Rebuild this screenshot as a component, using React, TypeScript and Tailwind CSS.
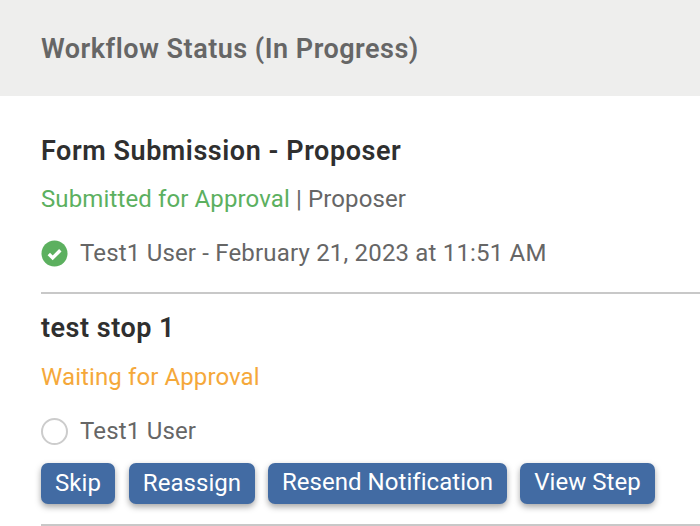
const buttons = [
  { label: "Skip", width: "w-[74px]", offset: "pb-[1px]" },
  { label: "Reassign", width: "w-[126px] ml-px", offset: "pb-[1px]" },
  { label: "Resend Notification", width: "w-[239px]", offset: "pb-[4px]" },
  { label: "View Step", width: "w-[135px]", offset: "pb-[4px]" },
];

const App = () => {
  return (
    <div className="w-[700px] h-[526px] overflow-hidden bg-white font-['Roboto',sans-serif]">
      <div className="h-[96px] bg-[#eeeeed] pl-[41px] pt-[2px] flex items-center">
        <h1 className="text-[27px] font-semibold text-[#666666] leading-none tracking-[0.5px]">
          Workflow Status (In Progress)
        </h1>
      </div>

      <div className="pl-[41px]">
        <h2 className="mt-[40px] text-[27px] leading-[30px] font-semibold text-[#2f2f2f] tracking-[0.55px]">
          Form Submission - Proposer
        </h2>
        <p className="mt-[19px] text-[24px] leading-[28px] text-[#666666] tracking-[0.12px]">
          <span className="text-[#5cb05f]">Submitted for Approval</span> | Proposer
        </p>
        <div className="mt-[26px] flex items-center gap-[12px] h-[28px]">
          <svg width="27" height="27" viewBox="0 0 27 27">
            <circle cx="13.5" cy="13.5" r="13" fill="#5cb05f" />
            <path
              d="M7.8 14l3.9 3.9 7.6-7.6"
              fill="none"
              stroke="#fff"
              strokeWidth="3.4"
            />
          </svg>
          <span className="text-[24px] leading-[28px] text-[#666666] tracking-[0.18px]">
            Test1 User - February 21, 2023 at 11:51 AM
          </span>
        </div>

        <div className="mt-[25px] h-[2px] bg-[#c8c8c8]" />

        <h2 className="mt-[19px] text-[27px] leading-[30px] font-semibold text-[#2f2f2f] tracking-[0.5px]">
          test stop 1
        </h2>
        <p className="mt-[20px] text-[24px] leading-[28px] text-[#f5a83a] tracking-[0.1px]">
          Waiting for Approval
        </p>
        <div className="mt-[26px] flex items-center gap-[12px] h-[28px]">
          <div className="w-[27px] h-[27px] rounded-full border-2 border-[#cccccc] bg-white" />
          <span className="text-[24px] leading-[28px] text-[#666666] tracking-[0.18px]">Test1 User</span>
        </div>

        <div className="mt-[18px] flex gap-[13px]">
          {buttons.map((b) => (
            <div
              key={b.label}
              className={`h-[41px] ${b.width} ${b.offset} shrink-0 rounded-[7px] bg-[#426ba3] text-white text-[24px] tracking-[0.05px] leading-none flex items-center justify-center shadow-[0_3px_6px_rgba(0,0,0,0.35)]`}
            >
              {b.label}
            </div>
          ))}
        </div>

        <div className="mt-[20px] h-[2px] bg-[#c8c8c8]" />
      </div>
    </div>
  );
};

export default App;
